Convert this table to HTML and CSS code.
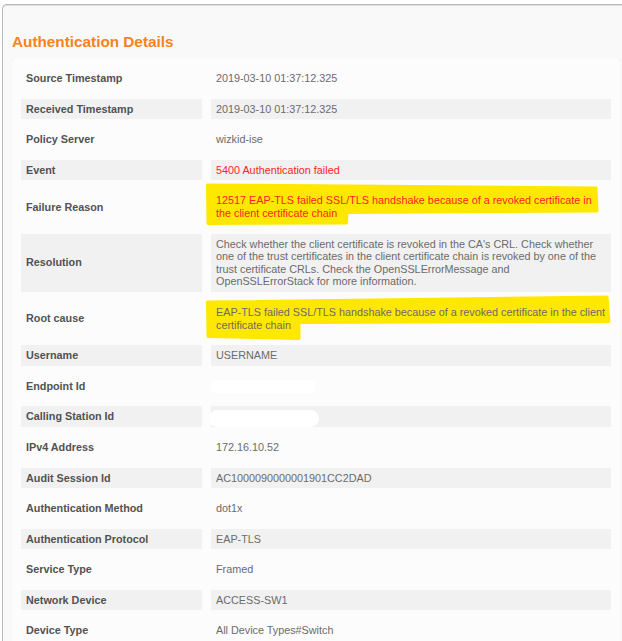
FILE: index.html
```
<!DOCTYPE html>
<html lang="en">
<head>
<meta charset="utf-8">
<title>Authentication Details</title>
<link rel="stylesheet" href="styles.css">
</head>
<body>
<div class="panel">
  <h2 class="title">Authentication Details</h2>
  <div class="details">
    <table class="grid">
      <colgroup><col class="c-label"><col class="c-value"></colgroup>
      <tbody>
        <tr><td class="lbl">Source Timestamp</td><td class="val">2019-03-10 01:37:12.325</td></tr>
        <tr class="alt"><td class="lbl">Received Timestamp</td><td class="val">2019-03-10 01:37:12.325</td></tr>
        <tr><td class="lbl">Policy Server</td><td class="val">wizkid-ise</td></tr>
        <tr class="alt"><td class="lbl">Event</td><td class="val red">5400 Authentication failed</td></tr>
        <tr><td class="lbl">Failure Reason</td><td class="val red hl multi"><svg class="marker" width="1" height="1" aria-hidden="true"><polygon points="-3.5,-5 385,-2 386,21 136,22.5 135.5,33 -3,33.5"/></svg><span class="txt">12517 EAP-TLS failed SSL/TLS handshake because of a revoked certificate in<br>the client certificate chain</span></td></tr>
        <tr class="alt"><td class="lbl">Resolution</td><td class="val multi">Check whether the client certificate is revoked in the CA's CRL. Check whether<br>one of the trust certificates in the client certificate chain is revoked by one of the<br>trust certificate CRLs. Check the OpenSSLErrorMessage and<br>OpenSSLErrorStack for more information.</td></tr>
        <tr><td class="lbl">Root cause</td><td class="val hl multi"><svg class="marker" width="1" height="1" aria-hidden="true"><polygon points="-3.5,0 396,-5 398,19.5 88,20.5 88,36.5 -3,34.5"/></svg><span class="txt">EAP-TLS failed SSL/TLS handshake because of a revoked certificate in the client<br>certificate chain</span></td></tr>
        <tr class="alt"><td class="lbl">Username</td><td class="val">USERNAME</td></tr>
        <tr><td class="lbl">Endpoint Id</td><td class="val"><span class="redact redact-a"></span></td></tr>
        <tr class="alt"><td class="lbl">Calling Station Id</td><td class="val"><span class="redact redact-b"></span></td></tr>
        <tr><td class="lbl">IPv4 Address</td><td class="val">172.16.10.52</td></tr>
        <tr class="alt"><td class="lbl">Audit Session Id</td><td class="val">AC1000090000001901CC2DAD</td></tr>
        <tr><td class="lbl">Authentication Method</td><td class="val">dot1x</td></tr>
        <tr class="alt"><td class="lbl">Authentication Protocol</td><td class="val">EAP-TLS</td></tr>
        <tr><td class="lbl">Service Type</td><td class="val">Framed</td></tr>
        <tr class="alt"><td class="lbl">Network Device</td><td class="val">ACCESS-SW1</td></tr>
        <tr><td class="lbl">Device Type</td><td class="val">All Device Types#Switch</td></tr>
      </tbody>
    </table>
  </div>
</div>
</body>
</html>
```
FILE: styles.css
```
html, body {
  margin: 0;
  padding: 0;
  background: #ffffff;
  overflow: hidden;
}

body {
  font-family: "Liberation Sans", Arial, sans-serif;
}

.panel {
  margin: 4px 0 0 2px;
  padding: 28px 2px 0 9px;
  background: #f9f9f9;
  border-top: 1px solid #b9b9b9;
  border-left: 1px solid #b9b9b9;
  border-top-left-radius: 5px;
  box-shadow: inset 0 1px 0 #dedede;
  min-height: 700px;
}

.title {
  margin: 0 0 8px 0;
  font-size: 15.3px;
  line-height: 17px;
  font-weight: bold;
  color: #f7821e;
}

.details {
  width: 608px;
  background: #fcfcfc;
  border-radius: 4px;
  box-shadow: 0 0 1px rgba(0, 0, 0, 0.10);
}

.grid {
  width: 608px;
  table-layout: fixed;
  border-collapse: separate;
  border-spacing: 9px 10px;
  font-size: 10.8px;
  line-height: 12.6px;
}

.c-label { width: 181px; }
.c-value { width: 400px; }

.grid td {
  padding: 4px 5px;
  vertical-align: middle;
}

.alt td {
  background: #f1f1f1;
}

.lbl {
  font-weight: bold;
  color: #525252;
  white-space: nowrap;
}

.val {
  color: #6b6b6b;
}

.red {
  color: #ff2323;
}

.multi {
  white-space: nowrap;
}

.hl {
  position: relative;
}

.marker {
  position: absolute;
  left: 0;
  top: 0;
  overflow: visible;
  z-index: 0;
}

.marker polygon {
  fill: #ffe800;
  stroke: #ffe800;
  stroke-width: 3;
  stroke-linejoin: round;
}

.txt {
  position: relative;
  z-index: 1;
}

.redact {
  display: inline-block;
  vertical-align: top;
  background: #ffffff;
  border-radius: 8px;
}

.redact-a {
  width: 106px;
  height: 13px;
  margin: 0.5px 0 -1px -5.7px;
}

.redact-b {
  width: 110px;
  height: 17px;
  margin: 0 0 -4.4px -6.7px;
  border-radius: 9px;
}
```
